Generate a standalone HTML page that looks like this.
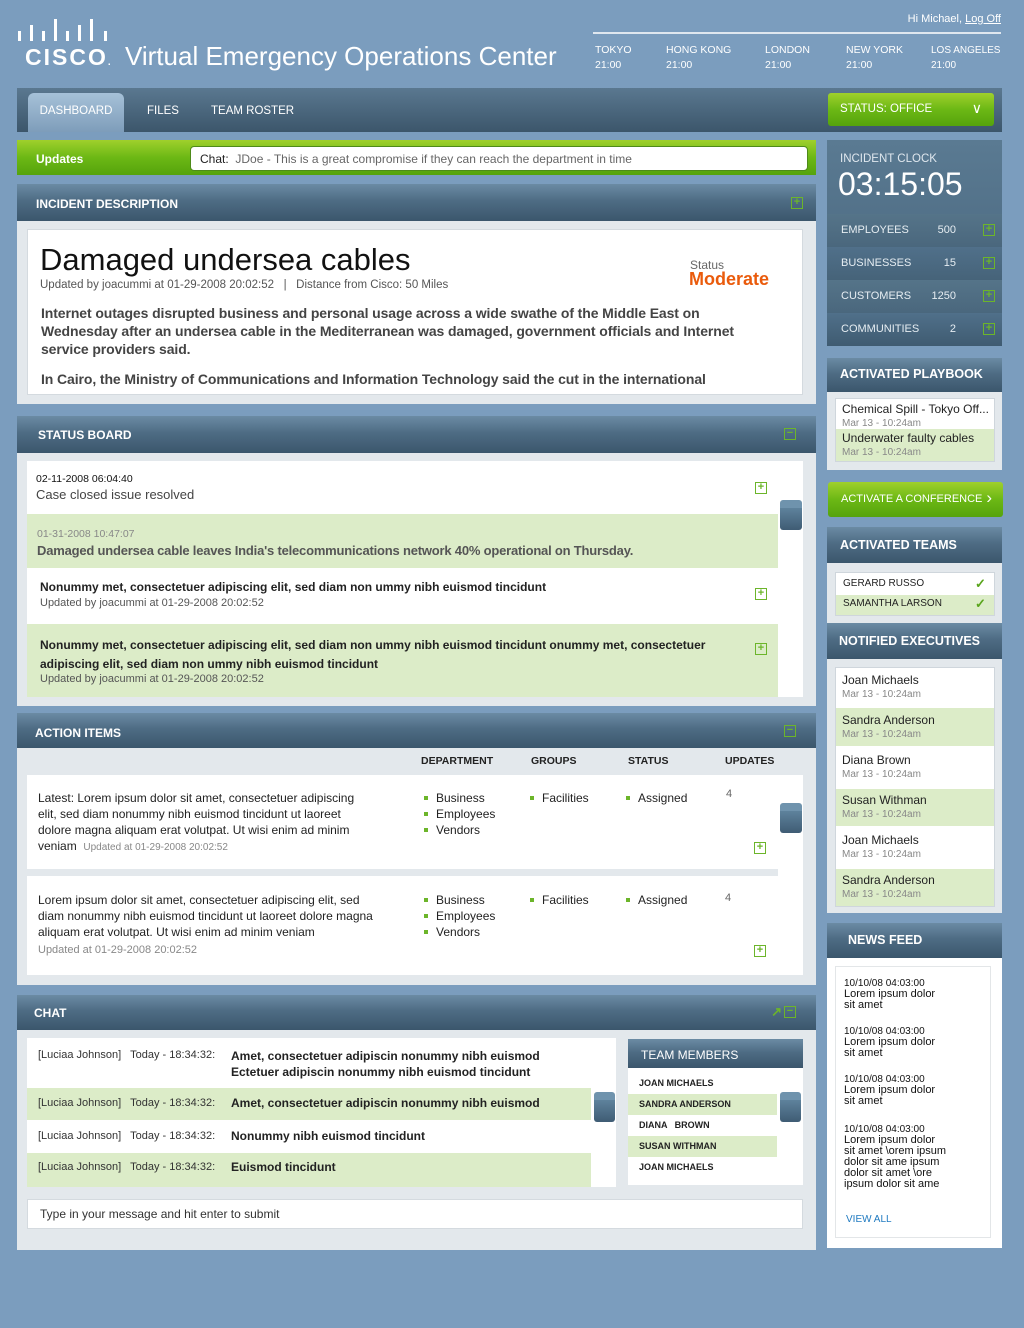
<!DOCTYPE html>
<html><head><meta charset="utf-8">
<style>
*{margin:0;padding:0;box-sizing:border-box}
body{width:1024px;height:1328px;background:#7b9dbe;font-family:"Liberation Sans",sans-serif;position:relative;overflow:hidden;color:#222}
.a{position:absolute}
.n{font-family:"Liberation Sans Narrow","Liberation Sans",sans-serif;white-space:nowrap}
.hdr{background:linear-gradient(#6b8ba4,#4e6c84 45%,#3b566c);color:#fff;font-weight:bold;font-size:12px}
.body{background:#e3e8ec}
.pl{width:12px;height:12px;border:1.5px solid #6cb52a;color:#6cb52a;font-size:11px;line-height:9px;text-align:center;font-weight:bold;background:transparent}
.grn{background:#dcecc8}
.wh{background:#fff}
.thumb{background:linear-gradient(#5e829c,#3f5c74);border-radius:3px;border-top:8px solid #6f93ad}
.gbtn{background:linear-gradient(#9fd02c,#6cb815 50%,#55a30c);border-radius:3px;color:#fff}
.sm{font-size:10px;color:#888}
.bul li{list-style:none;padding-left:12px;position:relative}
.bul li:before{content:"";position:absolute;left:0;top:6px;width:4px;height:4px;background:#6cb52a}
</style></head><body>

<!-- logo -->
<svg class="a" style="left:18px;top:19px" width="92" height="24" viewBox="0 0 92 24">
<g fill="#fff">
<rect x="0" y="12" width="3" height="10"/><rect x="12" y="6" width="3" height="16"/><rect x="24" y="12" width="3" height="10"/><rect x="36" y="0" width="3" height="22"/><rect x="48" y="12" width="3" height="10"/><rect x="60" y="6" width="3" height="16"/><rect x="72" y="0" width="3" height="22"/><rect x="86" y="12" width="3" height="10"/>
</g></svg>
<div class="a" style="left:25px;top:44px;color:#fff;font-weight:bold;font-size:23px;letter-spacing:2px">CISCO<span style="font-size:10px;letter-spacing:0">.</span></div>
<div class="a" style="left:125px;top:41px;color:#fff;font-size:26px">Virtual Emergency Operations Center</div>
<div class="a n" style="right:23px;top:13px;color:#fff;font-size:11px">Hi Michael, <u>Log Off</u></div>
<div class="a" style="left:593px;top:32px;width:408px;height:2px;background:#dfe7ef"></div>
<div class="a n" style="top:43px;left:595px;color:#fff;font-size:10.5px;line-height:15px">TOKYO<br>21:00</div>
<div class="a n" style="top:43px;left:666px;color:#fff;font-size:10.5px;line-height:15px">HONG KONG<br>21:00</div>
<div class="a n" style="top:43px;left:765px;color:#fff;font-size:10.5px;line-height:15px">LONDON<br>21:00</div>
<div class="a n" style="top:43px;left:846px;color:#fff;font-size:10.5px;line-height:15px">NEW YORK<br>21:00</div>
<div class="a n" style="top:43px;left:931px;color:#fff;font-size:10px;line-height:15px">LOS ANGELES<br>21:00</div>

<!-- nav -->
<div class="a" style="left:17px;top:88px;width:985px;height:44px;background:linear-gradient(#5a7890,#3c566b)"></div>
<div class="a n" style="left:28px;top:93px;width:96px;height:39px;background:linear-gradient(#a6c1d8,#7e9dba);border-radius:6px 6px 0 0;color:#fff;font-size:11.5px;padding-top:12px;text-align:center">DASHBOARD</div>
<div class="a n" style="left:147px;top:105px;color:#fff;font-size:11.5px">FILES</div>
<div class="a n" style="left:211px;top:105px;color:#fff;font-size:11.5px">TEAM ROSTER</div>
<div class="a gbtn n" style="left:828px;top:93px;width:166px;height:33px;font-size:11.5px;padding:10px 12px">STATUS: OFFICE<span style="position:absolute;right:12px;top:7px;font-size:14px">&#8744;</span></div>

<!-- updates -->
<div class="a gbtn" style="left:17px;top:140px;width:799px;height:35px;border-radius:0"></div>
<div class="a n" style="left:36px;top:152px;color:#fff;font-weight:bold;font-size:12px">Updates</div>
<div class="a n" style="left:190px;top:146px;width:618px;height:25px;background:#fff;border:1px solid #4e8a1a;border-radius:4px;font-size:12px;padding:5px 9px;color:#666"><span style="color:#222">Chat:</span>&nbsp; JDoe - This is a great compromise if they can reach the department in time</div>

<!-- incident description -->
<div class="a body" style="left:17px;top:184px;width:799px;height:220px"></div>
<div class="a hdr" style="left:17px;top:184px;width:799px;height:37px;padding:13px 19px">INCIDENT DESCRIPTION<div class="a pl" style="right:13px;top:13px">+</div></div>
<div class="a wh" style="left:27px;top:229px;width:776px;height:166px;border:1px solid #d4dadf"></div>
<div class="a" style="left:40px;top:242px;font-size:31px;color:#111">Damaged undersea cables</div>
<div class="a n" style="left:40px;top:279px;font-size:11.5px;color:#555">Updated by joacummi at 01-29-2008 20:02:52 &nbsp; | &nbsp; Distance from Cisco: 50 Miles</div>
<div class="a" style="left:690px;top:258px;font-size:12px;color:#666">Status</div>
<div class="a" style="left:689px;top:269px;font-size:18px;color:#ea5b0c;font-weight:bold">Moderate</div>
<div class="a" style="left:41px;top:304px;width:725px;font-size:14px;font-weight:bold;color:#444;line-height:18px;letter-spacing:-0.1px">Internet outages disrupted business and personal usage across a wide swathe of the Middle East on Wednesday after an undersea cable in the Mediterranean was damaged, government officials and Internet service providers said.</div>
<div class="a n" style="left:41px;top:371px;font-size:14px;font-weight:bold;color:#444;letter-spacing:-0.1px">In Cairo, the Ministry of Communications and Information Technology said the cut in the international</div>

<!-- status board -->
<div class="a body" style="left:17px;top:416px;width:799px;height:290px"></div>
<div class="a hdr" style="left:17px;top:416px;width:799px;height:37px;padding:12px 21px">STATUS BOARD<div class="a pl" style="right:20px;top:12px">&minus;</div></div>
<div class="a wh" style="left:27px;top:461px;width:776px;height:236px"></div>
<div class="a n" style="left:36px;top:473px;font-size:10.5px;color:#111">02-11-2008 06:04:40</div>
<div class="a n" style="left:36px;top:487px;font-size:13px;color:#444">Case closed issue resolved</div>
<div class="a pl" style="left:755px;top:482px">+</div>
<div class="a grn" style="left:27px;top:514px;width:751px;height:54px"></div>
<div class="a n" style="left:37px;top:528px;font-size:10.5px;color:#888">01-31-2008 10:47:07</div>
<div class="a n" style="left:37px;top:543px;font-size:13px;font-weight:bold;color:#555;letter-spacing:-0.2px">Damaged undersea cable leaves India's telecommunications network 40% operational on Thursday.</div>
<div class="a n" style="left:40px;top:580px;font-size:12px;font-weight:bold">Nonummy met, consectetuer adipiscing elit, sed diam non ummy nibh euismod tincidunt</div>
<div class="a n" style="left:40px;top:597px;font-size:11px;color:#555">Updated by joacummi at 01-29-2008 20:02:52</div>
<div class="a pl" style="left:755px;top:588px">+</div>
<div class="a grn" style="left:27px;top:624px;width:751px;height:73px"></div>
<div class="a" style="left:40px;top:636px;width:700px;font-size:12px;font-weight:bold;line-height:19px">Nonummy met, consectetuer adipiscing elit, sed diam non ummy nibh euismod tincidunt onummy met, consectetuer adipiscing elit, sed diam non ummy nibh euismod tincidunt</div>
<div class="a n" style="left:40px;top:673px;font-size:11px;color:#555">Updated by joacummi at 01-29-2008 20:02:52</div>
<div class="a pl" style="left:755px;top:643px">+</div>
<div class="a thumb" style="left:780px;top:500px;width:22px;height:30px"></div>

<!-- action items -->
<div class="a body" style="left:17px;top:713px;width:799px;height:272px"></div>
<div class="a hdr" style="left:17px;top:713px;width:799px;height:35px;padding:13px 18px">ACTION ITEMS<div class="a pl" style="right:20px;top:12px">&minus;</div></div>
<div class="a n" style="left:421px;top:755px;font-size:10.5px;font-weight:bold">DEPARTMENT</div>
<div class="a n" style="left:531px;top:755px;font-size:10.5px;font-weight:bold">GROUPS</div>
<div class="a n" style="left:628px;top:755px;font-size:10.5px;font-weight:bold">STATUS</div>
<div class="a n" style="left:725px;top:755px;font-size:10.5px;font-weight:bold">UPDATES</div>
<div class="a wh" style="left:27px;top:775px;width:776px;height:200px"></div>
<div class="a" style="left:27px;top:869px;width:751px;height:7px;background:#e3e8ec"></div>
<div class="a" style="left:38px;top:790px;width:330px;font-size:12px;line-height:16px">Latest: Lorem ipsum dolor sit amet, consectetuer adipiscing elit, sed diam nonummy nibh euismod tincidunt ut laoreet dolore magna aliquam erat volutpat. Ut wisi enim ad minim veniam &nbsp;<span class="sm">Updated at 01-29-2008 20:02:52</span></div>
<ul class="a bul" style="left:424px;top:790px;font-size:12px;line-height:16px"><li>Business</li><li>Employees</li><li>Vendors</li></ul>
<ul class="a bul" style="left:530px;top:790px;font-size:12px;line-height:16px"><li>Facilities</li></ul>
<ul class="a bul" style="left:626px;top:790px;font-size:12px;line-height:16px"><li>Assigned</li></ul>
<div class="a" style="left:726px;top:788px;font-size:11px;color:#666">4</div>
<div class="a pl" style="left:754px;top:842px">+</div>
<div class="a" style="left:38px;top:892px;width:340px;font-size:12px;line-height:16px">Lorem ipsum dolor sit amet, consectetuer adipiscing elit, sed diam nonummy nibh euismod tincidunt ut laoreet dolore magna aliquam erat volutpat. Ut wisi enim ad minim veniam</div>
<div class="a sm" style="left:38px;top:944px;font-size:11px">Updated at 01-29-2008 20:02:52</div>
<ul class="a bul" style="left:424px;top:892px;font-size:12px;line-height:16px"><li>Business</li><li>Employees</li><li>Vendors</li></ul>
<ul class="a bul" style="left:530px;top:892px;font-size:12px;line-height:16px"><li>Facilities</li></ul>
<ul class="a bul" style="left:626px;top:892px;font-size:12px;line-height:16px"><li>Assigned</li></ul>
<div class="a" style="left:725px;top:892px;font-size:11px;color:#666">4</div>
<div class="a pl" style="left:754px;top:945px">+</div>
<div class="a thumb" style="left:780px;top:803px;width:22px;height:30px"></div>

<!-- chat -->
<div class="a body" style="left:17px;top:995px;width:799px;height:255px"></div>
<div class="a hdr" style="left:17px;top:995px;width:799px;height:35px;padding:11px 17px">CHAT<div class="a" style="right:34px;top:9px;color:#6cb52a;font-size:13px">&#8599;</div><div class="a pl" style="right:20px;top:11px">&minus;</div></div>
<div class="a wh" style="left:27px;top:1038px;width:589px;height:149px"></div>
<div class="a grn" style="left:27px;top:1088px;width:564px;height:32px"></div>
<div class="a grn" style="left:27px;top:1153px;width:564px;height:34px"></div>
<div class="a n" style="left:38px;top:1049px;font-size:11px;color:#333">[Luciaa Johnson] &nbsp; Today - 18:34:32:</div>
<div class="a n" style="left:231px;top:1048px;font-size:12px;font-weight:bold;line-height:16px">Amet, consectetuer adipiscin nonummy nibh euismod<br>Ectetuer adipiscin nonummy nibh euismod tincidunt</div>
<div class="a n" style="left:38px;top:1097px;font-size:11px;color:#333">[Luciaa Johnson] &nbsp; Today - 18:34:32:</div>
<div class="a n" style="left:231px;top:1096px;font-size:12px;font-weight:bold">Amet, consectetuer adipiscin nonummy nibh euismod</div>
<div class="a n" style="left:38px;top:1130px;font-size:11px;color:#333">[Luciaa Johnson] &nbsp; Today - 18:34:32:</div>
<div class="a n" style="left:231px;top:1129px;font-size:12px;font-weight:bold">Nonummy nibh euismod tincidunt</div>
<div class="a n" style="left:38px;top:1161px;font-size:11px;color:#333">[Luciaa Johnson] &nbsp; Today - 18:34:32:</div>
<div class="a n" style="left:231px;top:1160px;font-size:12px;font-weight:bold">Euismod tincidunt</div>
<div class="a thumb" style="left:594px;top:1092px;width:21px;height:30px"></div>
<div class="a wh" style="left:628px;top:1039px;width:175px;height:146px"></div>
<div class="a hdr n" style="left:628px;top:1039px;width:175px;height:29px;padding:9px 13px;font-weight:normal;font-size:12px">TEAM MEMBERS</div>
<div class="a grn" style="left:628px;top:1094px;width:149px;height:21px"></div>
<div class="a grn" style="left:628px;top:1136px;width:149px;height:21px"></div>
<div class="a n" style="left:639px;top:1073px;font-size:9px;font-weight:bold;line-height:21px">JOAN MICHAELS<br>SANDRA ANDERSON<br>DIANA &nbsp; BROWN<br>SUSAN WITHMAN<br>JOAN MICHAELS</div>
<div class="a thumb" style="left:780px;top:1092px;width:21px;height:30px"></div>
<div class="a wh n" style="left:27px;top:1199px;width:776px;height:30px;border:1px solid #d4dadf;font-size:12px;padding:7px 12px;color:#333">Type in your message and hit enter to submit</div>

<!-- right column -->
<div class="a" style="left:827px;top:140px;width:175px;height:206px;background:linear-gradient(#5a7a92,#46637a)"></div>
<div class="a n" style="left:840px;top:153px;color:#dfe7ee;font-size:11.5px">INCIDENT CLOCK</div>
<div class="a" style="left:838px;top:166px;color:#fff;font-size:32px">03:15:05</div>
<div class="a" style="left:827px;top:214px;width:175px;height:33px;background:linear-gradient(#557489,#4a677d)"></div>
<div class="a" style="left:827px;top:247px;width:175px;height:33px;background:linear-gradient(#50708a,#466379)"></div>
<div class="a" style="left:827px;top:280px;width:175px;height:33px;background:linear-gradient(#557489,#4a677d)"></div>
<div class="a" style="left:827px;top:313px;width:175px;height:33px;background:linear-gradient(#50708a,#3f5b71)"></div>
<div class="a" style="left:841px;top:214px;color:#e6edf2;font-size:11px;line-height:33px">EMPLOYEES<br>BUSINESSES<br>CUSTOMERS<br>COMMUNITIES</div>
<div class="a" style="left:900px;top:214px;width:56px;text-align:right;color:#e6edf2;font-size:11px;line-height:33px">500<br>15<br>1250<br>2</div>
<div class="a pl" style="left:983px;top:224px">+</div>
<div class="a pl" style="left:983px;top:257px">+</div>
<div class="a pl" style="left:983px;top:290px">+</div>
<div class="a pl" style="left:983px;top:323px">+</div>

<div class="a body" style="left:827px;top:358px;width:175px;height:112px"></div>
<div class="a hdr" style="left:827px;top:358px;width:175px;height:34px;padding:9px 13px;font-size:12.5px">ACTIVATED PLAYBOOK</div>
<div class="a wh" style="left:835px;top:398px;width:160px;height:64px;border:1px solid #cfd6dc;overflow:hidden"></div>
<div class="a grn" style="left:836px;top:429px;width:158px;height:32px"></div>
<div class="a" style="left:842px;top:403px;font-size:12px;line-height:13px;white-space:nowrap;width:150px;overflow:hidden">Chemical Spill - Tokyo Off...<br><span class="sm">Mar 13 - 10:24am</span></div>
<div class="a" style="left:842px;top:432px;font-size:12px;line-height:13px">Underwater faulty cables<br><span class="sm">Mar 13 - 10:24am</span></div>

<div class="a gbtn n" style="left:828px;top:482px;width:175px;height:35px;font-size:11px;padding:11px 13px">ACTIVATE A CONFERENCE<span style="position:absolute;right:11px;top:6px;font-size:17px">&#8250;</span></div>

<div class="a body" style="left:827px;top:527px;width:175px;height:386px"></div>
<div class="a hdr" style="left:827px;top:527px;width:175px;height:36px;padding:11px 13px;font-size:12.5px">ACTIVATED TEAMS</div>
<div class="a wh" style="left:835px;top:572px;width:160px;height:44px;border:1px solid #cfd6dc"></div>
<div class="a grn" style="left:836px;top:595px;width:158px;height:20px"></div>
<div class="a" style="left:843px;top:574px;font-size:10px;line-height:20px">GERARD RUSSO<br>SAMANTHA LARSON</div>
<div class="a" style="left:975px;top:574px;font-size:13px;color:#5aa51c;line-height:20px;font-weight:bold">&#10003;<br>&#10003;</div>
<div class="a hdr" style="left:827px;top:623px;width:175px;height:36px;padding:11px 12px;font-size:12.5px">NOTIFIED EXECUTIVES</div>
<div class="a wh" style="left:835px;top:667px;width:160px;height:240px;border:1px solid #cfd6dc"></div>
<div class="a grn" style="left:836px;top:708px;width:158px;height:38px"></div>
<div class="a grn" style="left:836px;top:789px;width:158px;height:37px"></div>
<div class="a grn" style="left:836px;top:869px;width:158px;height:37px"></div>
<div class="a" style="left:842px;top:674px;font-size:12px;line-height:13px">Joan Michaels<br><span class="sm">Mar 13 - 10:24am</span></div>
<div class="a" style="left:842px;top:714px;font-size:12px;line-height:13px">Sandra Anderson<br><span class="sm">Mar 13 - 10:24am</span></div>
<div class="a" style="left:842px;top:754px;font-size:12px;line-height:13px">Diana Brown<br><span class="sm">Mar 13 - 10:24am</span></div>
<div class="a" style="left:842px;top:794px;font-size:12px;line-height:13px">Susan Withman<br><span class="sm">Mar 13 - 10:24am</span></div>
<div class="a" style="left:842px;top:834px;font-size:12px;line-height:13px">Joan Michaels<br><span class="sm">Mar 13 - 10:24am</span></div>
<div class="a" style="left:842px;top:874px;font-size:12px;line-height:13px">Sandra Anderson<br><span class="sm">Mar 13 - 10:24am</span></div>

<div class="a wh" style="left:827px;top:923px;width:175px;height:325px"></div>
<div class="a hdr" style="left:827px;top:923px;width:175px;height:35px;padding:10px 21px;font-size:12.5px">NEWS FEED</div>
<div class="a" style="left:835px;top:966px;width:156px;height:272px;border:1px solid #e3e6e8"></div>
<div class="a n" style="left:844px;top:978px;font-size:11px;line-height:11px;color:#111">
<div style="font-size:10px">10/10/08 04:03:00</div>Lorem ipsum dolor<br>sit amet
<div style="font-size:10px;margin-top:15px">10/10/08 04:03:00</div>Lorem ipsum dolor<br>sit amet
<div style="font-size:10px;margin-top:15px">10/10/08 04:03:00</div>Lorem ipsum dolor<br>sit amet
<div style="font-size:10px;margin-top:17px">10/10/08 04:03:00</div>Lorem ipsum dolor<br>sit amet \orem ipsum<br>dolor sit ame ipsum<br>dolor sit amet \ore<br>ipsum dolor sit ame
</div>
<div class="a n" style="left:846px;top:1214px;font-size:10px;color:#1f7ac0">VIEW ALL</div>
</body></html>
